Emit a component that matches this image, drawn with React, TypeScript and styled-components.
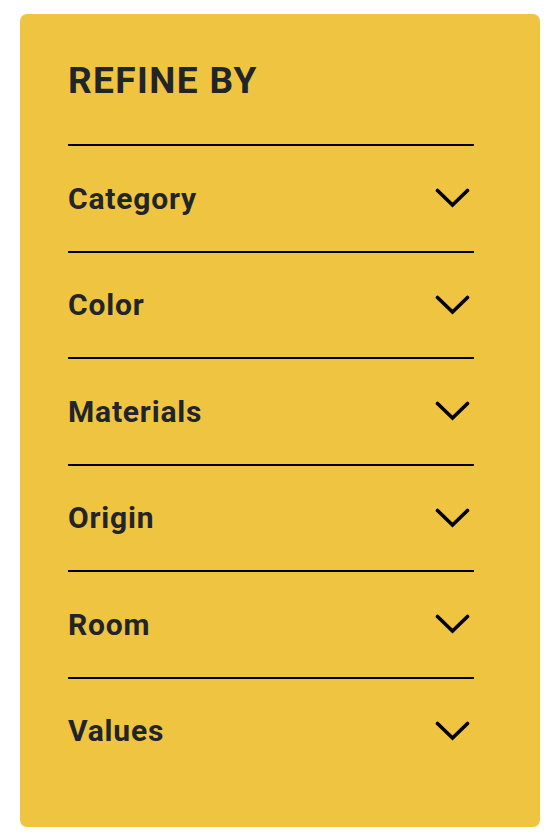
import React from 'react';
import styled, { createGlobalStyle } from 'styled-components';

const filters = ['Category', 'Color', 'Materials', 'Origin', 'Room', 'Values'];

const Chevron: React.FC = () => (
  <ChevronIcon width="35" height="20" viewBox="0 0 35 20" aria-hidden="true">
    <polyline
      points="2.5,2.5 17.5,17 32.5,2.5"
      fill="none"
      stroke="#000"
      strokeWidth="3.6"
      strokeLinecap="round"
      strokeLinejoin="miter"
    />
  </ChevronIcon>
);

const App: React.FC = () => (
  <>
    <GlobalStyle />
    <Page>
      <Panel>
        <Title>REFINE BY</Title>
        <List>
          {filters.map((name) => (
            <Row key={name}>
              <Label>{name}</Label>
              <Chevron />
            </Row>
          ))}
        </List>
      </Panel>
    </Page>
  </>
);

// Styles
const GlobalStyle = createGlobalStyle`
  body {
    margin: 0;
    background: #fff;
    font-family: Roboto, "Liberation Sans", sans-serif;
  }
`;

const Page = styled.div`
  padding: 14px 16px 14px 20px;
`;

const Panel = styled.aside`
  width: 520px;
  box-sizing: border-box;
  padding: 45px 66px 44px 48px;
  background: #efc440;
  border-radius: 7px;
`;

const Title = styled.h2`
  margin: 0 0 41px;
  font-size: 37px;
  line-height: 44px;
  letter-spacing: 1.4px;
  font-weight: 700;
  color: #212529;
`;

const List = styled.ul`
  list-style: none;
  margin: 0;
  padding: 0;
`;

const Row = styled.li`
  display: flex;
  align-items: center;
  justify-content: space-between;
  height: 104.5px;
  border-top: 2px solid #000;
  cursor: pointer;
`;

const Label = styled.span`
  font-size: 30px;
  letter-spacing: 0.8px;
  font-weight: 700;
  color: #212529;
`;

const ChevronIcon = styled.svg`
  display: block;
  margin-right: 4px;
`;

export default App;
